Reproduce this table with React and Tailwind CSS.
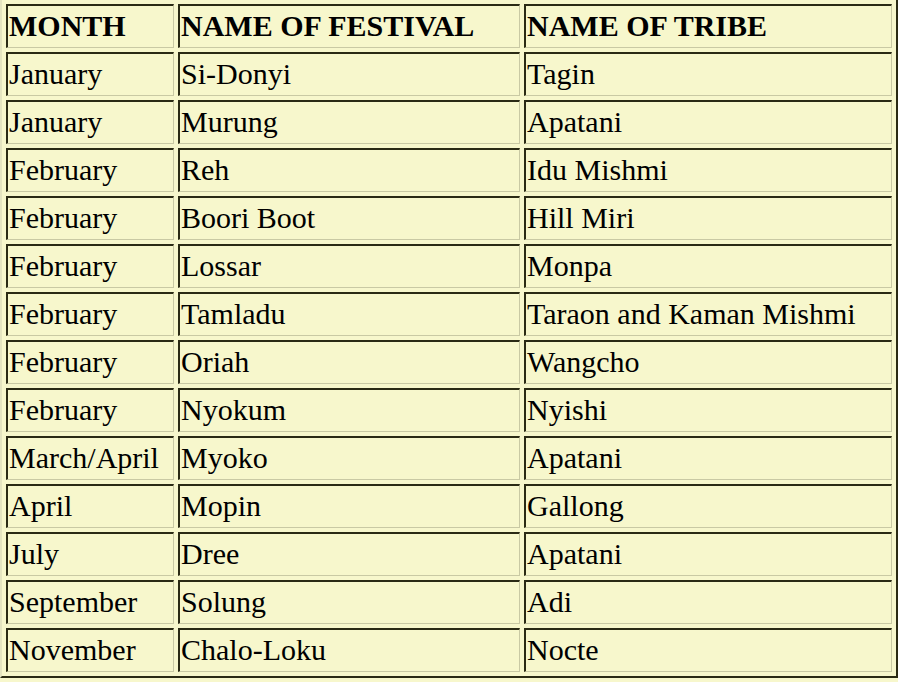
import React from "react";

const rows = [
  ["January", "Si-Donyi", "Tagin"],
  ["January", "Murung", "Apatani"],
  ["February", "Reh", "Idu Mishmi"],
  ["February", "Boori Boot", "Hill Miri"],
  ["February", "Lossar", "Monpa"],
  ["February", "Tamladu", "Taraon and Kaman Mishmi"],
  ["February", "Oriah", "Wangcho"],
  ["February", "Nyokum", "Nyishi"],
  ["March/April", "Myoko", "Apatani"],
  ["April", "Mopin", "Gallong"],
  ["July", "Dree", "Apatani"],
  ["September", "Solung", "Adi"],
  ["November", "Chalo-Loku", "Nocte"],
];

const cell =
  "h-[44px] box-border border-t-2 border-l-2 border-b border-r border-t-[#2a2a14] border-l-[#2a2a14] border-b-[#c9c9a4] border-r-[#c9c9a4] px-[1px] pt-0 pb-[2px] text-left align-middle leading-none";

export default function App() {
  return (
    <div className="w-[898px] h-[682px] bg-[#f7f7cc] overflow-hidden">
      <table
        className="w-[898px] table-fixed border-separate border-spacing-[4px] bg-[#f7f7cc] border-t-0 border-l-2 border-b-2 border-r-2 border-l-[#e4e4c0] border-b-[#2a2a14] border-r-[#2a2a14] text-black text-[30px]"
        style={{ fontFamily: '"Liberation Serif", "Times New Roman", serif' }}
      >
        <colgroup>
          <col className="w-[168px]" />
          <col className="w-[342px]" />
          <col className="w-[368px]" />
        </colgroup>
        <thead>
          <tr>
            <th className={cell + " font-bold"}>MONTH</th>
            <th className={cell + " font-bold"}>NAME OF FESTIVAL</th>
            <th className={cell + " font-bold"}>NAME OF TRIBE</th>
          </tr>
        </thead>
        <tbody>
          {rows.map((r, i) => (
            <tr key={i}>
              <td className={cell + " font-normal"}>{r[0]}</td>
              <td className={cell + " font-normal"}>{r[1]}</td>
              <td className={cell + " font-normal"}>{r[2]}</td>
            </tr>
          ))}
        </tbody>
      </table>
    </div>
  );
}
